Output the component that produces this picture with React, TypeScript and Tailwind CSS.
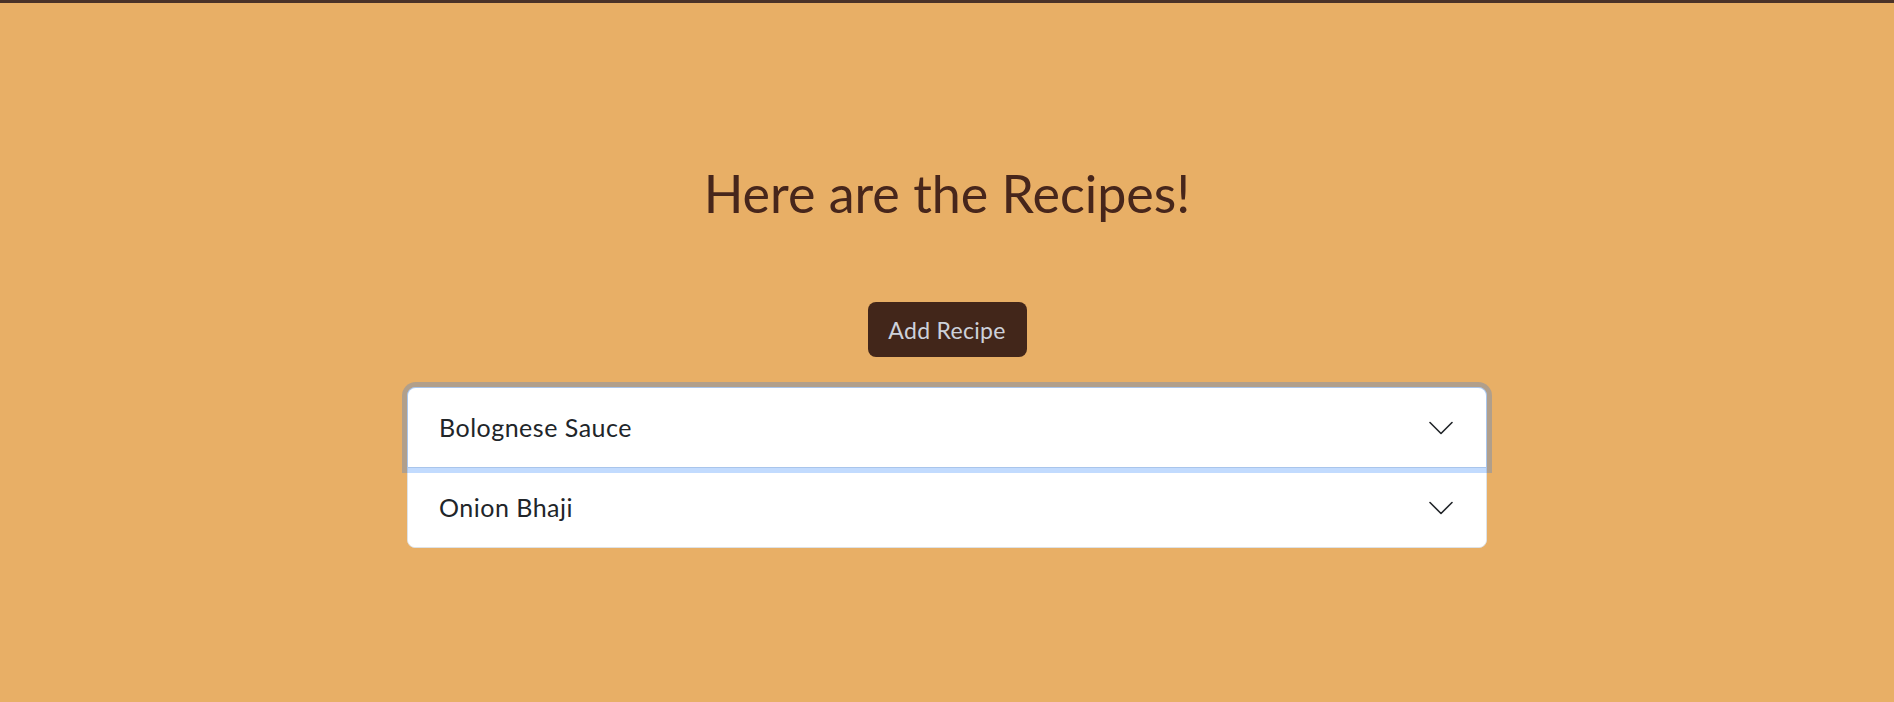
import React from "react";

const Chevron: React.FC = () => (
  <svg width="24" height="14" viewBox="0 0 24 14" fill="none" stroke="#212529" strokeWidth={1.6} strokeLinecap="round" strokeLinejoin="round">
    <path d="M1 1.5L12 12.5L23 1.5" />
  </svg>
);

const recipes = ["Bolognese Sauce", "Onion Bhaji"];

export default function App() {
  return (
    <div className="min-h-[702px] bg-[#e8af66] border-t-[3px] border-[#4a3228]" style={{ fontFamily: "Lato, 'Open Sans', sans-serif" }}>
      {/* Heading */}
      <h1 className="pt-[159px] text-center text-[52px] leading-[1.2] font-normal text-[#47261b]">
        Here are the Recipes!
      </h1>

      {/* Add button */}
      <div className="mt-[78px] flex justify-center">
        <button className="w-[159px] h-[55px] rounded-[8px] bg-[#42261a] text-[23px] tracking-[0.3px] text-[#cdd1da] flex items-center justify-center">
          Add Recipe
        </button>
      </div>

      {/* Accordion */}
      <div className="mt-[30px] mx-auto w-[1080px] bg-white border border-[#dee2e6] rounded-[8px]">
        {recipes.map((name, index) => (
          <div key={index} className={index > 0 ? "border-t border-[#dee2e6]" : ""}>
            <button
              className={`w-full h-[79px] flex items-center justify-between pl-[31px] pr-[33px] text-[25px] tracking-[0.5px] text-[#212529] bg-white ${
                index === 0 ? "relative z-10 rounded-t-[8px] shadow-[0_0_0_6px_rgba(13,110,253,0.25)]" : "rounded-b-[8px]"
              }`}
            >
              <span>{name}</span>
              <Chevron />
            </button>
          </div>
        ))}
      </div>
    </div>
  );
}
